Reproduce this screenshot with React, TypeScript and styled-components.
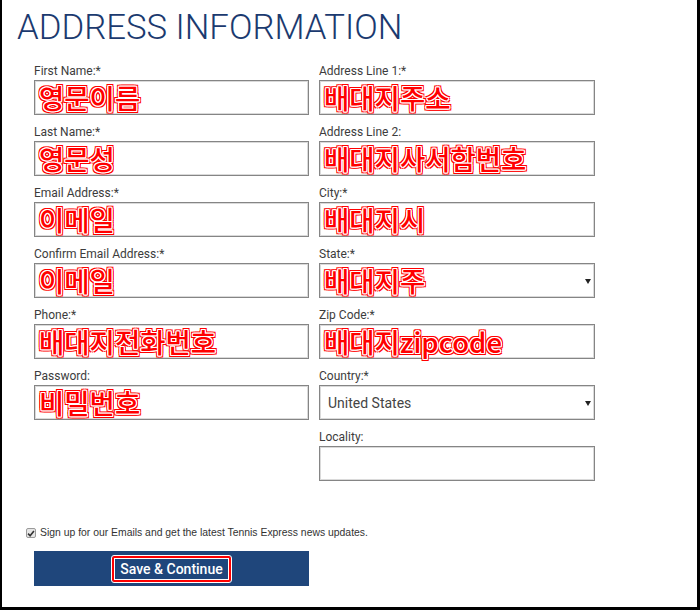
import React from "react";
import styled, { createGlobalStyle } from "styled-components";

type Field = {
	label: string;
	value?: string;
	select?: boolean;
	plain?: boolean;
};

const leftFields: Field[] = [
	{ label: "First Name:*", value: "영문이름" },
	{ label: "Last Name:*", value: "영문성" },
	{ label: "Email Address:*", value: "이메일" },
	{ label: "Confirm Email Address:*", value: "이메일" },
	{ label: "Phone:*", value: "배대지전화번호" },
	{ label: "Password:", value: "비밀번호" },
];

const rightFields: Field[] = [
	{ label: "Address Line 1:*", value: "배대지주소" },
	{ label: "Address Line 2:", value: "배대지사서함번호" },
	{ label: "City:*", value: "배대지시" },
	{ label: "State:*", value: "배대지주", select: true },
	{ label: "Zip Code:*", value: "배대지zipcode" },
	{ label: "Country:*", value: "United States", select: true, plain: true },
	{ label: "Locality:" },
];

const FormField = ({ label, value, select, plain }: Field) => (
	<FieldWrap>
		<Label>{label}</Label>
		<InputBox>
			{value && (plain ? <PlainValue>{value}</PlainValue> : <Note>{value}</Note>)}
			{select && <Arrow />}
		</InputBox>
	</FieldWrap>
);

const App = () => (
	<>
		<GlobalStyle />
		<Page>
			<Title>ADDRESS INFORMATION</Title>
			<Columns>
				<Column>
					{leftFields.map((f) => (
						<FormField key={f.label} {...f} />
					))}
				</Column>
				<Column>
					{rightFields.map((f) => (
						<FormField key={f.label} {...f} />
					))}
				</Column>
			</Columns>
			<CheckRow>
				<CheckBox>
					<svg width="9" height="9" viewBox="0 0 9 9">
						<path d="M1.2 4.6 L3.5 7 L7.8 1.6" fill="none" stroke="#333" strokeWidth="1.8" />
					</svg>
				</CheckBox>
				<CheckText>Sign up for our Emails and get the latest Tennis Express news updates.</CheckText>
			</CheckRow>
			<SaveButton>
				<Marked>Save &amp; Continue</Marked>
			</SaveButton>
		</Page>
	</>
);

const GlobalStyle = createGlobalStyle`
	html, body {
		margin: 0;
		padding: 0;
		background: #fff;
	}
`;

const Page = styled.div`
	width: 700px;
	height: 610px;
	box-sizing: border-box;
	border-left: 2px solid #000;
	border-right: 3px solid #000;
	border-bottom: 3px solid #000;
	font-family: Roboto, "Liberation Sans", sans-serif;
	overflow: hidden;
`;

const Title = styled.h1`
	margin: 0;
	padding: 10px 0 0 15px;
	font-size: 34.7px;
	line-height: 35px;
	font-weight: 300;
	color: #1b3a6f;
`;

const Columns = styled.div`
	display: grid;
	grid-template-columns: 275px 276px;
	column-gap: 10px;
	padding: 18px 0 0 32px;
`;

const Column = styled.div`
	display: flex;
	flex-direction: column;
	gap: 9px;
`;

const FieldWrap = styled.div`
	display: flex;
	flex-direction: column;
`;

const Label = styled.div`
	font-size: 12px;
	line-height: 16px;
	height: 16px;
	margin-bottom: 1px;
	color: #3c3c3c;
`;

const InputBox = styled.div`
	position: relative;
	height: 35px;
	box-sizing: border-box;
	border: 1px solid #858585;
	box-shadow: inset 0 0 0 1px #dadada;
	display: flex;
	align-items: center;
	padding-left: 4px;
	background: #fff;
`;

const Note = styled.span`
	font-family: "Noto Sans CJK KR", sans-serif;
	font-weight: 500;
	font-size: 27.5px;
	line-height: 33px;
	color: #f00;
	white-space: nowrap;
	text-shadow:
		1px 0 #fff, -1px 0 #fff, 0 1px #fff, 0 -1px #fff,
		1px 1px #fff, -1px -1px #fff, 1px -1px #fff, -1px 1px #fff,
		2px 0 #f00, -2px 0 #f00, 0 2px #f00, 0 -2px #f00,
		2px 2px #f00, -2px -2px #f00, 2px -2px #f00, -2px 2px #f00;
`;

const PlainValue = styled.span`
	font-size: 14px;
	color: #444;
	padding-left: 4px;
`;

const Arrow = styled.span`
	position: absolute;
	right: 3px;
	top: 50%;
	margin-top: -2px;
	width: 0;
	height: 0;
	border-left: 3px solid transparent;
	border-right: 3px solid transparent;
	border-top: 5px solid #222;
`;

const CheckRow = styled.div`
	display: flex;
	align-items: center;
	gap: 4px;
	margin: 45px 0 0 24px;
`;

const CheckBox = styled.span`
	width: 10px;
	height: 10px;
	box-sizing: border-box;
	border: 1px solid #9a9a9a;
	border-radius: 2px;
	background: #e6e6e6;
	display: flex;
	align-items: center;
	justify-content: center;
`;

const CheckText = styled.span`
	font-family: "Liberation Sans", Arial, sans-serif;
	font-size: 10.4px;
	line-height: 14px;
	color: #333;
`;

const SaveButton = styled.div`
	width: 275px;
	height: 35px;
	margin: 11px 0 0 32px;
	background: #1f467b;
	display: flex;
	align-items: center;
	justify-content: center;
`;

const Marked = styled.span`
	color: #fff;
	font-size: 14px;
	font-weight: 500;
	line-height: 18px;
	padding: 2px 6px;
	border: 2px solid #f00;
	outline: 1px solid #fff;
	border-radius: 2px;
	box-shadow: inset 0 0 0 1px #fff;
`;

export default App;
